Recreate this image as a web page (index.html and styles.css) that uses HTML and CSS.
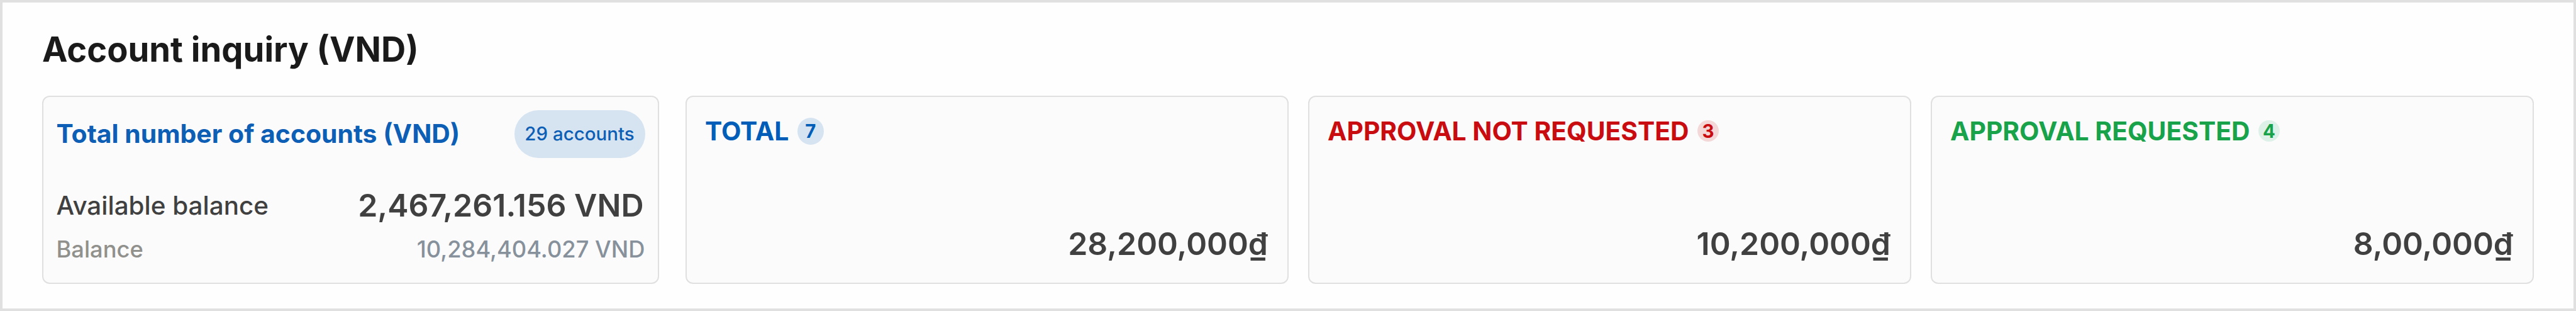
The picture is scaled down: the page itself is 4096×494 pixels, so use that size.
FILE: index.html
```html
<!DOCTYPE html>
<html lang="en">

<head>
    <meta charset="UTF-8">
    <meta name="viewport" content="width=device-width, initial-scale=1.0">
    <title>Account inquiry</title>
    <link rel="stylesheet" href="styles.css">
</head>

<body>
    <main class="inquiry">
        <h1>Account inquiry (VND)</h1>

        <div class="cards">
            <section class="card account-card">
                <div class="account-head">
                    <h2>Total number of accounts (VND)</h2>
                    <span class="pill">29 accounts</span>
                </div>
                <div class="row available">
                    <span>Available balance</span>
                    <strong>2,467,261.156 VND</strong>
                </div>
                <div class="row balance">
                    <span>Balance</span>
                    <span class="value">10,284,404.027 VND</span>
                </div>
            </section>

            <div class="status-cards">
                <section class="card status-card total">
                    <div class="status-head">
                        <h2>TOTAL</h2>
                        <span class="count">7</span>
                    </div>
                    <p class="amount">28,200,000₫</p>
                </section>

                <section class="card status-card not-requested">
                    <div class="status-head">
                        <h2>APPROVAL NOT REQUESTED</h2>
                        <span class="count">3</span>
                    </div>
                    <p class="amount">10,200,000₫</p>
                </section>

                <section class="card status-card requested">
                    <div class="status-head">
                        <h2>APPROVAL REQUESTED</h2>
                        <span class="count">4</span>
                    </div>
                    <p class="amount">8,00,000₫</p>
                </section>
            </div>
        </div>
    </main>
</body>

</html>
```
FILE: styles.css
```css
* {
    box-sizing: border-box;
}

body {
    margin: 0;
    font-family: 'Inter', sans-serif;
    color: #404040;
    background: #fefefe;
}

h1,
h2,
p {
    margin: 0;
}

.inquiry {
    height: 494px;
    padding: 41px 63px 0;
    border: 4px solid #e0e0e0;
}

h1 {
    font-size: 54.3px;
    font-weight: 700;
    line-height: 66px;
    color: #1a1a1a;
}

h2 {
    font-size: 40.8px;
    font-weight: 700;
    line-height: 50px;
    white-space: nowrap;
}

.cards {
    display: flex;
    gap: 41.5px;
    margin-top: 41px;
}

.card {
    height: 299px;
    background: #fbfbfb;
    border: 2px solid #e0e0e0;
    border-radius: 12px;
}

/* accounts summary */
.account-card {
    flex: 0 0 981px;
    padding: 21px 20.5px 0;
}

.account-head,
.row {
    display: flex;
    align-items: center;
    justify-content: space-between;
}

.account-head h2 {
    padding-bottom: 3px;
    font-size: 40.9px;
    color: #0d5eb5;
}

.pill {
    display: flex;
    align-items: center;
    justify-content: center;
    width: 208px;
    height: 76px;
    padding-bottom: 3px;
    border-radius: 38px;
    background: #d6e4f1;
    color: #0d5eb5;
    font-size: 29.5px;
    font-weight: 500;
}

.available {
    height: 60px;
    margin-top: 45px;
    font-size: 40.4px;
    font-weight: 500;
}

.available strong {
    margin-right: 2px;
    font-size: 50px;
    font-weight: 600;
}

.balance {
    height: 50px;
    margin-top: 14.5px;
    font-size: 36.3px;
    font-weight: 500;
    color: #90908c;
}

.balance .value {
    color: #86919c;
}

/* approval status */
.status-cards {
    flex: 1;
    display: grid;
    grid-template-columns: repeat(3, 1fr);
    gap: 30.5px;
}

.status-card {
    display: flex;
    flex-direction: column;
    justify-content: space-between;
    padding: 29px 31px 32px 29.5px;
}

.status-head {
    display: flex;
    align-items: center;
    gap: 13.5px;
}

.count {
    display: flex;
    align-items: center;
    justify-content: center;
    width: 34px;
    height: 34px;
    border-radius: 50%;
    font-size: 29.5px;
    font-weight: 700;
}

.amount {
    font-size: 49.9px;
    font-weight: 600;
    line-height: 60px;
    text-align: right;
}

.total {
    color: #005eb8;
}

.total .count {
    width: 42px;
    height: 43px;
    background: #d6e4f1;
}

.not-requested {
    color: #c90c0f;
}

.not-requested .count {
    background: #f4d8d8;
}

.requested {
    color: #18a34b;
}

.requested .count {
    background: #def1e8;
}

.status-card .amount {
    color: #404040;
}
```
